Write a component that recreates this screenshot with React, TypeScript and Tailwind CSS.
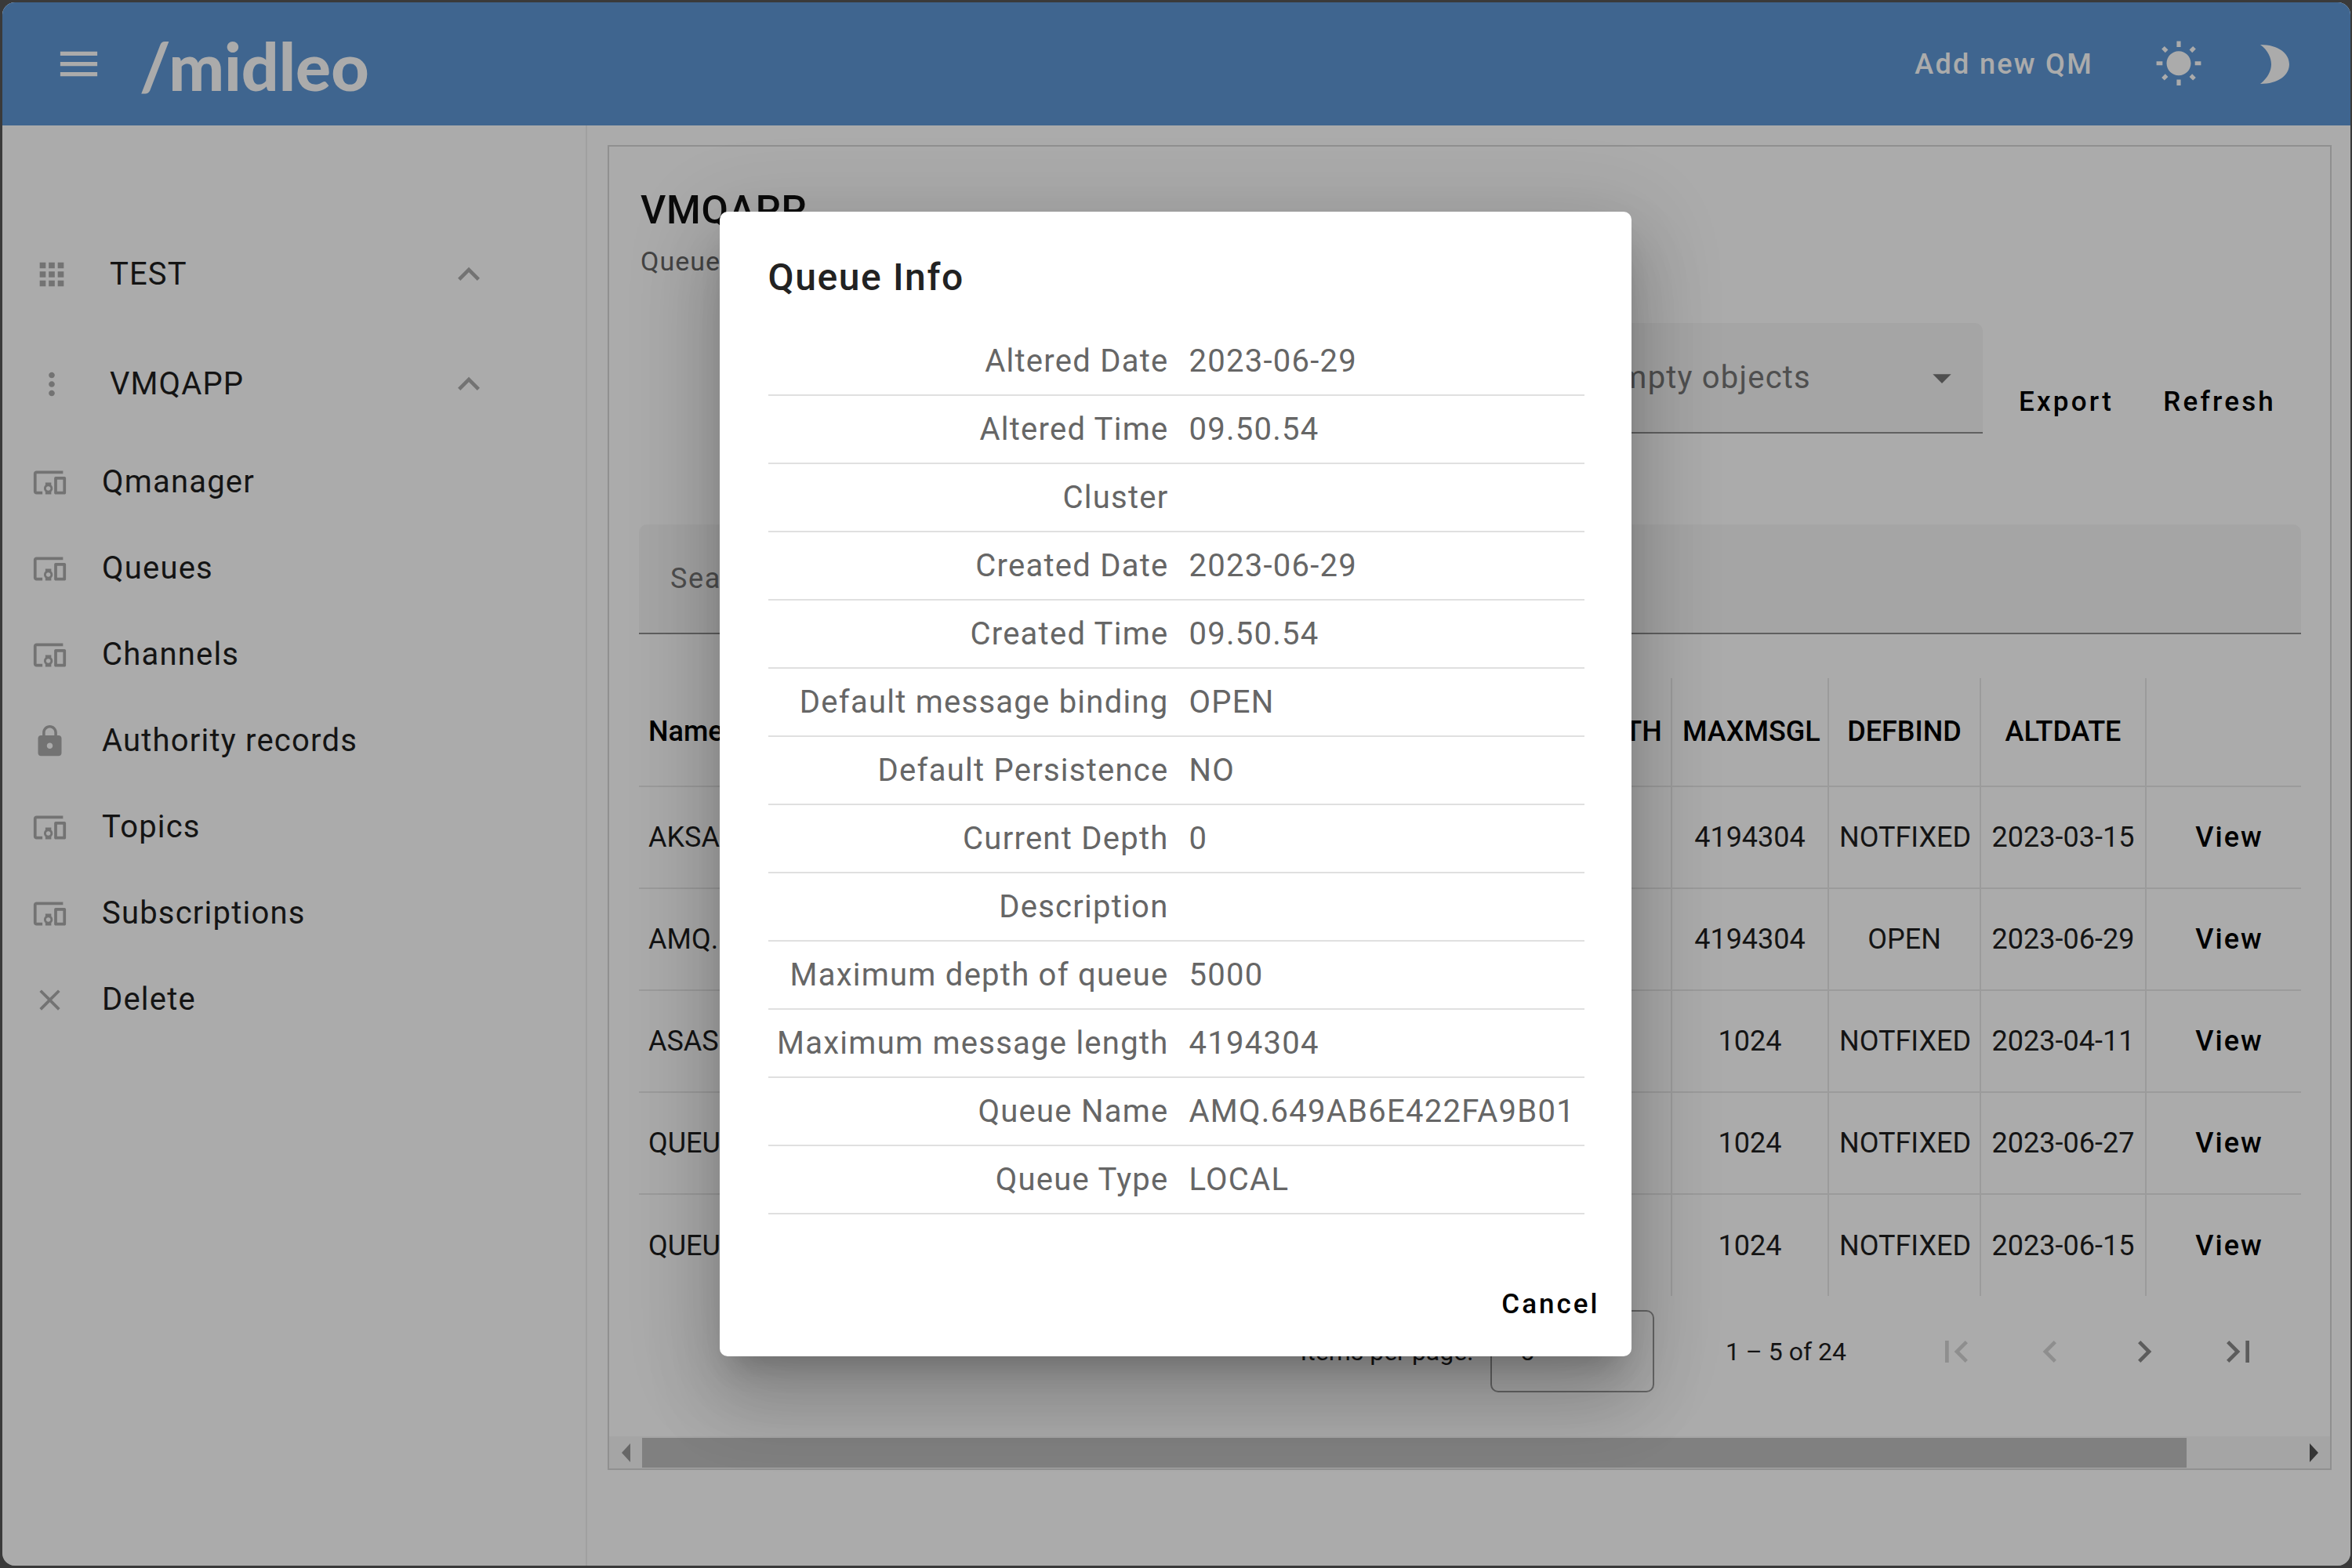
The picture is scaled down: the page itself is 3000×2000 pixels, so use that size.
import React from "react";
import {
  MdApps,
  MdArrowDropDown,
  MdChevronLeft,
  MdChevronRight,
  MdClose,
  MdDevicesOther,
  MdExpandLess,
  MdFirstPage,
  MdLastPage,
  MdLock,
  MdMenu,
  MdMoreVert,
  MdWbSunny,
} from "react-icons/md";

const navItems = [
  { label: "Qmanager", icon: MdDevicesOther },
  { label: "Queues", icon: MdDevicesOther },
  { label: "Channels", icon: MdDevicesOther },
  { label: "Authority records", icon: MdLock },
  { label: "Topics", icon: MdDevicesOther },
  { label: "Subscriptions", icon: MdDevicesOther },
  { label: "Delete", icon: MdClose },
];

// the dialog hides the middle columns, so those cells stay empty
const tableRows = [
  ["AKSA.Q", "", "", "", "4194304", "NOTFIXED", "2023-03-15"],
  ["AMQ.649A", "", "", "", "4194304", "OPEN", "2023-06-29"],
  ["ASAS.Q", "", "", "", "1024", "NOTFIXED", "2023-04-11"],
  ["QUEUE.1", "", "", "", "1024", "NOTFIXED", "2023-06-27"],
  ["QUEUE.2", "", "", "", "1024", "NOTFIXED", "2023-06-15"],
];

const queueInfo = [
  ["Altered Date", "2023-06-29"],
  ["Altered Time", "09.50.54"],
  ["Cluster", ""],
  ["Created Date", "2023-06-29"],
  ["Created Time", "09.50.54"],
  ["Default message binding", "OPEN"],
  ["Default Persistence", "NO"],
  ["Current Depth", "0"],
  ["Description", ""],
  ["Maximum depth of queue", "5000"],
  ["Maximum message length", "4194304"],
  ["Queue Name", "AMQ.649AB6E422FA9B01"],
  ["Queue Type", "LOCAL"],
];

const SideGroup = ({ label, icon: Icon }: { label: string; icon: React.ElementType }) => (
  <div className="flex h-[140px] items-center">
    <div className="flex w-[137px] justify-center pr-[12px]">
      <Icon size={46} className="text-[#acacac]" />
    </div>
    <span className="w-[430px] text-[40px] tracking-[1.1px] text-[#1f1f1f]">{label}</span>
    <MdExpandLess size={56} className="text-[#acacac]" />
  </div>
);

const Sidebar = () => (
  <aside className="w-[746px] shrink-0 border-r-2 border-[#efefef] pt-[120px]">
    <SideGroup label="TEST" icon={MdApps} />
    <SideGroup label="VMQAPP" icon={MdMoreVert} />
    <nav>
      {navItems.map((item) => (
        <div key={item.label} className="flex h-[110px] items-center">
          <div className="flex w-[127px] justify-center pr-[6px]">
            <item.icon size={45} className="text-[#acacac]" />
          </div>
          <span className="text-[40px] tracking-[1.2px] text-[#1f1f1f]">{item.label}</span>
        </div>
      ))}
    </nav>
  </aside>
);

const QueuesTable = () => (
  <table className="w-[2120px] table-fixed border-collapse text-[36px] text-[#1f1f1f]">
    <colgroup>
      <col className="w-[741px]" />
      <col className="w-[180px]" />
      <col className="w-[177px]" />
      <col className="w-[219px]" />
      <col className="w-[200px]" />
      <col className="w-[194px]" />
      <col className="w-[211px]" />
      <col className="w-[198px]" />
    </colgroup>
    <thead>
      <tr className="h-[138px] border-b-2 border-[#e8e8e8]">
        {["Name", "TYPE", "CURDEPTH", "MAXDEPTH", "MAXMSGL", "DEFBIND", "ALTDATE", ""].map((h, i) => (
          <th
            key={i}
            className={`pb-[2px] font-medium text-black ${
              i === 0 ? "pr-[13px] pl-[12px] text-left" : "border-l-2 border-[#e8e8e8] px-[13px] text-center"
            }`}
          >
            {h}
          </th>
        ))}
      </tr>
    </thead>
    <tbody>
      {tableRows.map((row) => (
        <tr key={row[0]} className="h-[130px] border-b-2 border-[#e8e8e8] last:border-b-0">
          {row.map((cell, i) => (
            <td
              key={i}
              className={`overflow-hidden whitespace-nowrap ${
                i === 0 ? "pr-[13px] pl-[12px] text-left" : "border-l-2 border-[#e8e8e8] px-[13px] text-center"
              }`}
            >
              {cell}
            </td>
          ))}
          <td className="border-l-2 border-[#e8e8e8] pl-[14px] text-center text-[36px] font-medium tracking-[2px] text-black">
            View
          </td>
        </tr>
      ))}
    </tbody>
  </table>
);

const PageButton = ({ icon: Icon, off }: { icon: React.ElementType; off?: boolean }) => (
  <div className="flex w-[120px] justify-center">
    <Icon size={56} className={off ? "text-[#d4d4d4]" : "text-[#8a8a8a]"} />
  </div>
);

const Paginator = () => (
  <div className="mt-[18px] flex h-[105px] items-center justify-end pr-[19px] text-[32px] text-[#1f1f1f]">
    <span className="mr-[22px]">Items per page:</span>
    <div className="mr-[91px] flex h-[105px] w-[209px] items-center justify-between rounded-[10px] border-2 border-[#999] px-[36px]">
      <span>5</span>
      <MdArrowDropDown size={40} className="text-[#8a8a8a]" />
    </div>
    <span className="mr-[80px]">1 – 5 of 24</span>
    <PageButton icon={MdFirstPage} off />
    <PageButton icon={MdChevronLeft} off />
    <PageButton icon={MdChevronRight} />
    <PageButton icon={MdLastPage} />
  </div>
);

const ScrollBar = () => (
  <div className="mt-auto flex h-[41px] items-center bg-[#f6f6f6]">
    <div className="flex w-[42px] justify-center">
      <div className="h-0 w-0 border-y-[12px] border-r-[11px] border-y-transparent border-r-[#9a9a9a]" />
    </div>
    <div className="h-[38px] w-[1970px] bg-[#bfbfbf]" />
    <div className="flex flex-1 justify-end pr-[15px]">
      <div className="h-0 w-0 border-y-[12px] border-l-[11px] border-y-transparent border-l-[#505050]" />
    </div>
  </div>
);

const Panel = () => (
  <section className="my-[25px] mr-[25px] ml-[26px] flex h-[1690px] w-[2199px] flex-col border-2 border-[#d7d7d7]">
    <div className="px-[38px] pt-[50px]">
      <h1 className="pl-[2px] text-[50px] leading-[62px] font-medium tracking-[0.8px] text-[#111]">VMQAPP</h1>
      <p className="mt-[12px] pl-[2px] text-[34px] leading-[44px] tracking-[1px] text-[#666]">Queues</p>
      <div className="mt-[57px] flex items-end justify-end">
        <div className="flex h-[141px] w-[800px] items-center justify-between rounded-t-[10px] border-b-2 border-[#8f8f8f] bg-[#f6f6f6] pr-[24px] pl-[32px]">
          <span className="pl-[184px] text-[40px] tracking-[1.2px] text-[#777]">Hide empty objects</span>
          <MdArrowDropDown size={56} className="text-[#777]" />
        </div>
        <div className="mb-[14px] ml-[46px] flex w-[328px] justify-between text-[35px] font-medium tracking-[3.2px] text-black">
          <span>Export</span>
          <span>Refresh</span>
        </div>
        <div className="w-[31px]" />
      </div>
      <div className="mt-[116px] flex h-[140px] w-[2120px] items-center rounded-t-[10px] border-b-2 border-[#8f8f8f] bg-[#f6f6f6] px-[40px] text-[36px] tracking-[1.6px] text-[#777]">
        Search
      </div>
      <div className="mt-[56px]">
        <QueuesTable />
      </div>
      <Paginator />
    </div>
    <ScrollBar />
  </section>
);

const Header = () => (
  <header className="flex h-[157px] items-center bg-[#5e97d5] text-white">
    <MdMenu size={63} className="ml-[66px]" />
    <span className="ml-[46px] pt-[4px] font-['Lato',sans-serif] text-[84px] leading-none font-black">/midleo</span>
    <span className="mr-[78px] ml-auto text-[36px] font-medium tracking-[2.3px]">Add new QM</span>
    <MdWbSunny size={62} />
    {/* the app's own dark mode crescent, fatter than brightness_3 */}
    <svg viewBox="0 0 38 50" className="mr-[78px] ml-[72px] h-[50px] w-[38px] fill-current">
      <path d="M1 0 C24 0 38 11 38 25 C38 39 24 50 1 50 C11 42 15 33 15 25 C15 17 11 7 1 0Z" />
    </svg>
  </header>
);

const QueueInfoDialog = () => (
  <div className="absolute inset-0 flex items-center justify-center pr-[3px]">
    <div className="flex h-[1460px] w-[1163px] flex-col rounded-[10px] bg-white pt-[54px] pr-[60px] pl-[62px] shadow-[0_26px_36px_-17px_rgba(0,0,0,0.2),0_58px_91px_7px_rgba(0,0,0,0.14),0_22px_110px_19px_rgba(0,0,0,0.12)]">
      <h2 className="text-[48px] leading-[60px] font-medium tracking-[1.6px] text-[#222]">Queue Info</h2>
      <div className="mt-[34px]">
        {queueInfo.map(([label, value]) => (
          <div
            key={label}
            className="flex h-[87px] items-center border-b-2 border-[#e0e0e0] text-[40px] tracking-[1.25px] text-[#666]"
          >
            <span className="w-[511px] text-right">{label}</span>
            <span className="ml-[26px]">{value}</span>
          </div>
        ))}
      </div>
      <div className="mt-auto -mr-[20px] flex justify-end pb-[46px] text-[35px] leading-[40px] font-medium tracking-[3px] text-black">
        Cancel
      </div>
    </div>
  </div>
);

export default function App() {
  return (
    <div className="h-[2000px] w-[3000px] overflow-hidden bg-[#3a3a3a] pt-[3px] pr-[2px] pb-[3px] pl-[3px] font-['Roboto',sans-serif]">
      <div className="relative h-[1994px] w-[2995px] overflow-hidden rounded-[16px] bg-white">
        <Header />
        <div className="flex h-[1837px]">
          <Sidebar />
          <Panel />
        </div>
        <div className="absolute inset-0 bg-black/33" />
        <QueueInfoDialog />
      </div>
    </div>
  );
}
